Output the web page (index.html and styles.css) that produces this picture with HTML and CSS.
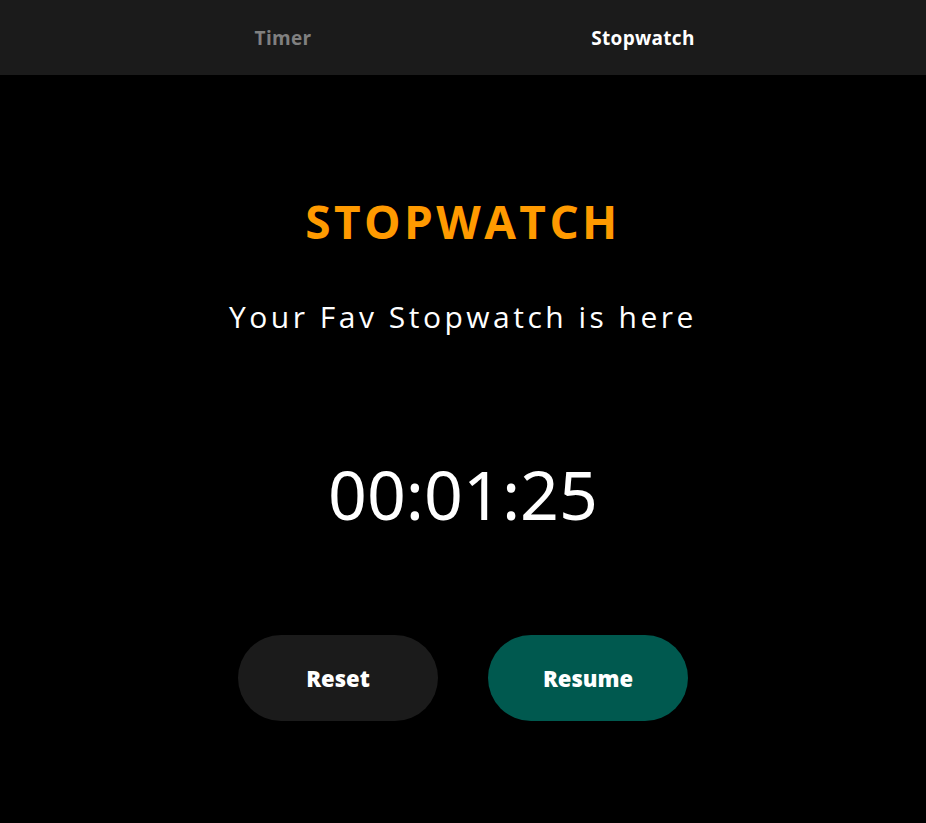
FILE: index.html
```html
<!DOCTYPE html>
<html lang="en">
<head>
<meta charset="utf-8">
<title>Stopwatch</title>
<link rel="stylesheet" href="styles.css">
</head>
<body>
<nav class="tabs">
  <div class="tab">Timer</div>
  <div class="tab active">Stopwatch</div>
</nav>
<main class="main">
  <h1 class="title">STOPWATCH</h1>
  <p class="subtitle">Your Fav Stopwatch is here</p>
  <div class="time">00:01:25</div>
  <div class="buttons">
    <button class="btn btn-reset">Reset</button>
    <button class="btn btn-resume">Resume</button>
  </div>
</main>
</body>
</html>
```
FILE: styles.css
```css
* { box-sizing: border-box; }
html, body { margin: 0; padding: 0; background: #000; }
body {
  font-family: "Open Sans", "Noto Sans", sans-serif;
  color: #fff;
  min-height: 823px;
}
.tabs {
  height: 75px;
  background: #1b1b1b;
  display: flex;
  justify-content: center;
}
.tab {
  width: 360px;
  display: flex;
  align-items: center;
  justify-content: center;
  font-weight: 700;
  font-size: 19px;
  letter-spacing: 0.3px;
  color: #808080;
}
.tab.active { color: #fff; }
.main {
  display: flex;
  flex-direction: column;
  align-items: center;
}
.title {
  margin: 116px 0 0;
  font-size: 46px;
  line-height: 60px;
  font-weight: 700;
  letter-spacing: 3.4px;
  color: #ff9a00;
}
.subtitle {
  margin: 48px 0 0;
  font-size: 30px;
  line-height: 36px;
  letter-spacing: 3.5px;
}
.time {
  margin-top: 114px;
  font-family: "Noto Sans", sans-serif;
  font-size: 68px;
  line-height: 90px;
  font-weight: 400;
}
.buttons {
  margin-top: 96px;
  display: flex;
  gap: 50px;
}
.btn {
  width: 200px;
  height: 86px;
  border: none;
  border-radius: 43px;
  color: #fff;
  font-family: "Open Sans", sans-serif;
  font-weight: 800;
  font-size: 22px;
}
.btn-reset { background: #1b1b1b; }
.btn-resume { background: #00594f; }
```
